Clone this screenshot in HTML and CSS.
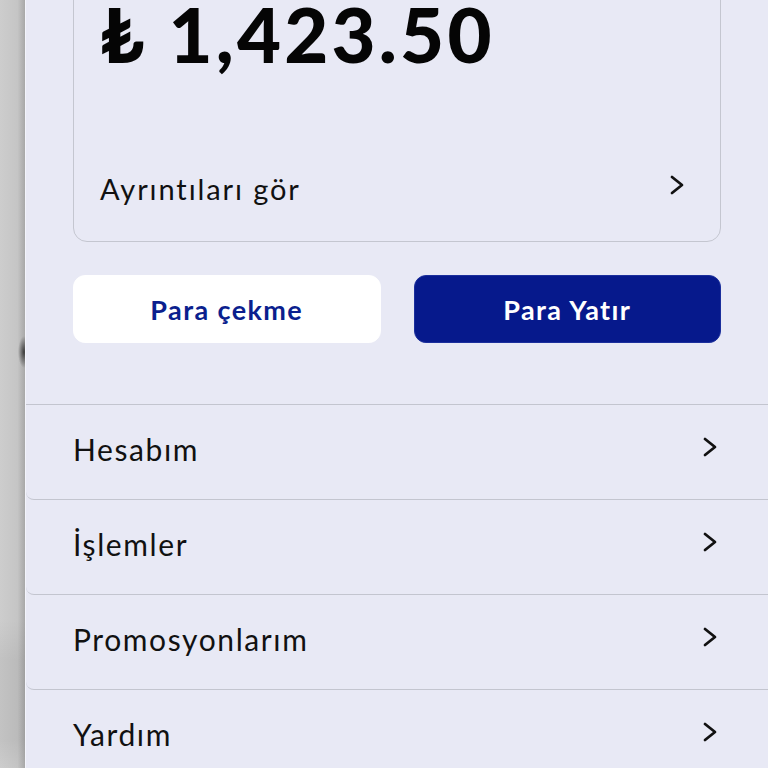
FILE: index.html
```html
<!DOCTYPE html>
<html lang="tr">

<head>
    <meta charset="utf-8">
    <meta name="viewport" content="width=device-width, initial-scale=1.0">
    <title>Hesap</title>

    <link rel="stylesheet" href="styles.css">
</head>

<body>
    <div class="backdrop"></div>

    <div class="panel">
        <!-- Balance card -->
        <div class="balance-card">
            <div class="amount">₺ 1,423.50</div>
            <a class="details" href="#">
                <span>Ayrıntıları gör</span>
                <svg class="chev" viewBox="0 0 16 22" width="16" height="22">
                    <path d="M3 3 L13 11 L3 19" />
                </svg>
            </a>
        </div>

        <div class="actions">
            <button class="btn btn-light">Para çekme</button>
            <button class="btn btn-dark">Para Yatır</button>
        </div>

        <!-- Menu -->
        <ul class="menu">
            <li><span>Hesabım</span><svg class="chev" viewBox="0 0 16 22" width="16" height="22"><path d="M3 3 L13 11 L3 19" /></svg></li>
            <li><span>İşlemler</span><svg class="chev" viewBox="0 0 16 22" width="16" height="22"><path d="M3 3 L13 11 L3 19" /></svg></li>
            <li><span>Promosyonlarım</span><svg class="chev" viewBox="0 0 16 22" width="16" height="22"><path d="M3 3 L13 11 L3 19" /></svg></li>
            <li><span>Yardım</span><svg class="chev" viewBox="0 0 16 22" width="16" height="22"><path d="M3 3 L13 11 L3 19" /></svg></li>
        </ul>
    </div>
</body>

</html>
```

FILE: styles.css
```css
html,
body {
    height: 100%;
    margin: 0;
    overflow: hidden;
}

body {
    display: flex;
    font-family: Lato, "DejaVu Sans", sans-serif;
    color: #111;
    background: #c9c9c9;
}

/* grey page peeking out behind the drawer */
.backdrop {
    width: 25px;
    flex-shrink: 0;
    background:
        radial-gradient(ellipse 6px 16px at 24px 352px, rgba(40, 40, 40, 0.85), rgba(40, 40, 40, 0) 100%),
        linear-gradient(to bottom, rgba(0, 0, 0, 0) 620px, rgba(0, 0, 0, 0.05) 660px, rgba(0, 0, 0, 0.05) 740px, rgba(0, 0, 0, 0) 768px),
        linear-gradient(to right, #cdcdcd 0%, #c5c5c5 70%, #a8a8a8 100%);
}

.panel {
    flex: 1;
    background: #e8e9f5;
    border-left: 1px solid #f3f4fb;
}

.balance-card {
    margin: -40px 47px 0;
    height: 282px;
    box-sizing: border-box;
    border: 1px solid #c4c6d0;
    border-radius: 14px;
    padding: 43px 35px 35px 26px;
    display: flex;
    flex-direction: column;
    justify-content: space-between;
}

.amount {
    font-size: 76px;
    font-weight: 900;
    line-height: 0.8;
    letter-spacing: 3.2px;
    color: #050505;
}

.details {
    display: flex;
    justify-content: space-between;
    align-items: center;
    text-decoration: none;
    color: #111;
    font-size: 29px;
    letter-spacing: 1.9px;
}

.details .chev {
    margin-top: -8px;
}

.chev {
    display: block;
}

.chev path {
    fill: none;
    stroke: #111;
    stroke-width: 2.8;
    stroke-linecap: round;
    stroke-linejoin: round;
}

.actions {
    display: flex;
    gap: 33px;
    margin: 33px 47px 0;
}

.btn {
    flex: 1;
    height: 68px;
    border-radius: 12px;
    font-family: Lato, "DejaVu Sans", sans-serif;
    font-size: 27px;
    font-weight: 700;
    letter-spacing: 1.4px;
    cursor: pointer;
}

.btn-light {
    background: #ffffff;
    border: 1px solid #ffffff;
    color: #0b1f8e;
}

.btn-dark {
    background: #06198c;
    border: 1px solid #1b2f9c;
    color: #ffffff;
}

.menu {
    list-style: none;
    margin: 61px 0 0;
    padding: 0;
    border-top: 1px solid #c3c5cf;
}

.menu li {
    display: flex;
    justify-content: space-between;
    align-items: center;
    box-sizing: border-box;
    height: 95px;
    padding: 0 50px 6px 47px;
    border-bottom: 1px solid #c3c5cf;
    border-radius: 0 0 0 8px;
    font-size: 30px;
    letter-spacing: 1.6px;
}

.menu li .chev {
    margin-top: -4px;
}
```
